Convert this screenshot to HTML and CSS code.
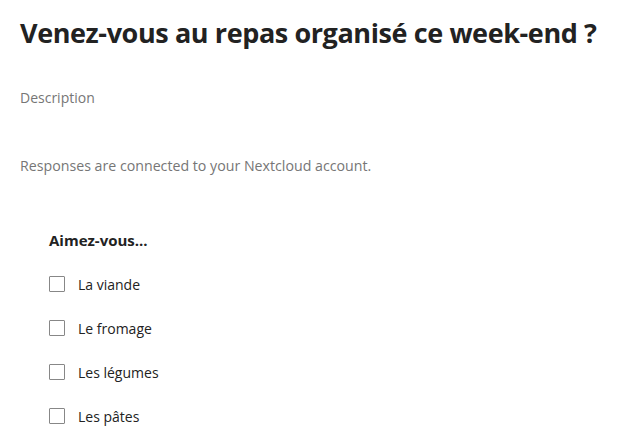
FILE: index.html
```html
<!DOCTYPE html>
<html lang="fr">
<head>
<meta charset="utf-8">
<title>Formulaire</title>
<link rel="stylesheet" href="styles.css">
</head>
<body>
<main class="form">
  <header class="form-header">
    <h1 class="form-title">Venez-vous au repas organisé ce week-end ?</h1>
    <p class="form-desc">Description</p>
    <p class="form-info">Responses are connected to your Nextcloud account.</p>
  </header>
  <section class="question">
    <h2 class="question-title">Aimez-vous...</h2>
    <ul class="options">
      <li class="option"><span class="box"></span><span class="label">La viande</span></li>
      <li class="option"><span class="box"></span><span class="label">Le fromage</span></li>
      <li class="option"><span class="box"></span><span class="label">Les légumes</span></li>
      <li class="option"><span class="box"></span><span class="label">Les pâtes</span></li>
    </ul>
  </section>
</main>
</body>
</html>
```
FILE: styles.css
```css
html, body {
  margin: 0;
  padding: 0;
  background: #ffffff;
}
body {
  font-family: "Open Sans", "Noto Sans", sans-serif;
  color: #222222;
}
.form {
  padding: 0 0 0 20px;
}
.form-header {
  display: flex;
  flex-direction: column;
}
.form-title {
  margin: 14px 0 0 0;
  font-size: 27px;
  line-height: 38px;
  font-weight: 700;
  color: #222222;
  letter-spacing: -0.4px;
}
.form-desc {
  margin: 36px 0 0 0;
  font-size: 14px;
  line-height: 20px;
  color: #767676;
}
.form-info {
  margin: 48px 0 0 0;
  font-size: 14.2px;
  line-height: 20px;
  color: #767676;
}
.question {
  padding: 53px 0 0 29px;
}
.question-title {
  margin: 0;
  font-size: 15px;
  line-height: 22px;
  font-weight: 700;
  color: #222222;
}
.options {
  list-style: none;
  margin: 22px 0 0 0;
  padding: 0;
  display: flex;
  flex-direction: column;
  gap: 22px;
}
.option {
  display: flex;
  align-items: center;
  gap: 13px;
  height: 22px;
  font-size: 14px;
  color: #222222;
}
.box {
  width: 14px;
  height: 14px;
  border: 1px solid #878787;
  border-radius: 1px;
  flex: none;
}
```
